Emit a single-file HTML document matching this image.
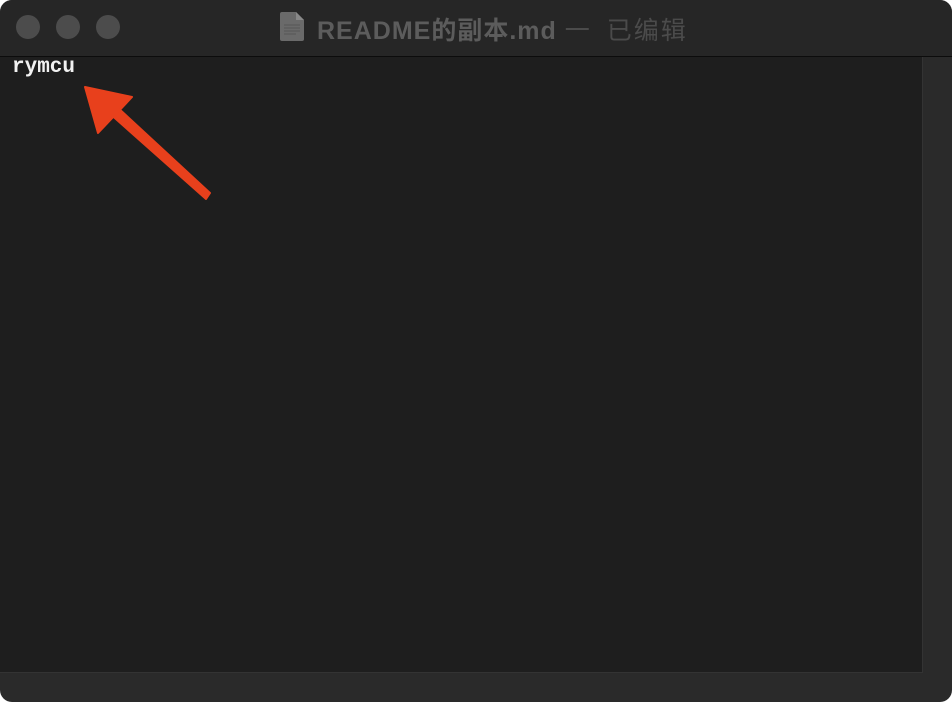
<!DOCTYPE html>
<html><head><meta charset="utf-8"><style>
html,body{margin:0;padding:0;background:#fff;width:952px;height:702px;overflow:hidden}
.win{position:absolute;left:0;top:0;width:952px;height:702px;background:#2a2a2a;border-radius:12px;overflow:hidden}
.title{position:absolute;left:0;top:0;width:952px;height:56px;background:#262626;border-bottom:1px solid #0c0c0c}
.dot{position:absolute;top:15px;width:24px;height:24px;border-radius:50%;background:#4c4c4c}
.t{position:absolute;left:317px;top:11px;font-family:"Liberation Sans","Noto Sans CJK SC",sans-serif;font-size:25px;letter-spacing:1px;font-weight:bold;color:#5c5c5c;white-space:nowrap}
.t span{font-weight:normal;color:#4b4b4b;margin-left:8px;word-spacing:6px;letter-spacing:2px}
.content{position:absolute;left:0;top:57px;width:922px;height:615px;background:#1e1e1e;border-right:1px solid #333;border-bottom:1px solid #333}
.txt{position:absolute;left:12px;top:56px;font-family:"Liberation Mono",monospace;font-weight:bold;font-size:21px;color:#f2f2f2}
</style></head><body>
<div class="win">
<div class="title">
<div class="dot" style="left:16px"></div>
<div class="dot" style="left:56px"></div>
<div class="dot" style="left:96px"></div>
<svg style="position:absolute;left:280px;top:12px" width="24" height="29" viewBox="0 0 24 29"><path d="M2 0H16L24 8V27Q24 29 22 29H2Q0 29 0 27V2Q0 0 2 0Z" fill="#6a6a6a"/><path d="M16 0V8H24" fill="#888"/><g stroke="#555" stroke-width="1"><line x1="4" y1="13" x2="20" y2="13"/><line x1="4" y1="16" x2="20" y2="16"/><line x1="4" y1="19" x2="20" y2="19"/><line x1="4" y1="22" x2="16" y2="22"/></g></svg>
<div class="t">README的副本.md<span>一 已编辑</span></div>
</div>
<div class="content"></div>
<div class="txt">rymcu</div>
<svg style="position:absolute;left:0;top:0" width="952" height="702">
<polygon points="108,112 117,107 210,193 206,199" fill="#e8401c" stroke="#e8401c" stroke-width="2" stroke-linejoin="round"/>
<polygon points="85,87 132,97 98,133" fill="#e8401c" stroke="#e8401c" stroke-width="2" stroke-linejoin="round"/>
</svg>
</div>
</body></html>
